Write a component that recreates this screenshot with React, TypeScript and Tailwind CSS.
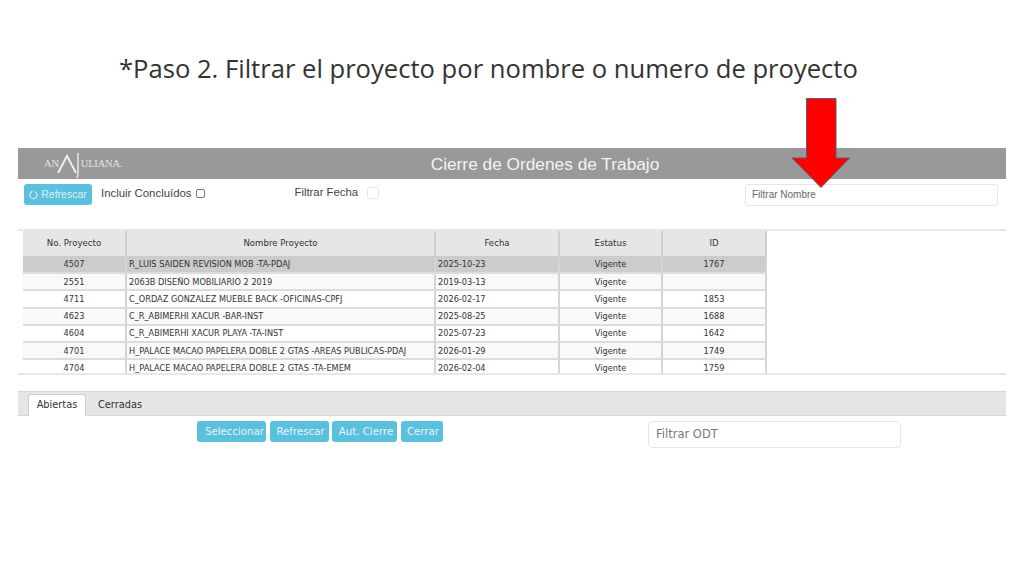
import React from "react";

const rows = [
  ["4507", "R_LUIS SAIDEN REVISION MOB -TA-PDAJ", "2025-10-23", "Vigente", "1767"],
  ["2551", "2063B DISEÑO MOBILIARIO 2 2019", "2019-03-13", "Vigente", ""],
  ["4711", "C_ORDAZ GONZALEZ MUEBLE BACK -OFICINAS-CPFJ", "2026-02-17", "Vigente", "1853"],
  ["4623", "C_R_ABIMERHI XACUR -BAR-INST", "2025-08-25", "Vigente", "1688"],
  ["4604", "C_R_ABIMERHI XACUR PLAYA -TA-INST", "2025-07-23", "Vigente", "1642"],
  ["4701", "H_PALACE MACAO PAPELERA DOBLE 2 GTAS -AREAS PUBLICAS-PDAJ", "2026-01-29", "Vigente", "1749"],
  ["4704", "H_PALACE MACAO PAPELERA DOBLE 2 GTAS -TA-EMEM", "2026-02-04", "Vigente", "1759"],
];

const cols = "grid grid-cols-[104px_309px_124px_103px_104px]";

function ActionButton({ label, width }: { label: string; width: string }) {
  return (
    <button className={`${width} h-[21px] rounded-[3px] bg-[#5bc0de] text-[10.2px] text-[#e4f5fa] font-['DejaVu_Sans',sans-serif] flex items-center justify-center`}>
      {label}
    </button>
  );
}

export default function App() {
  return (
    <div className="relative w-[1024px] h-[576px] overflow-hidden bg-white text-[#333] font-['Liberation_Sans',sans-serif]">
      <h1 className="pt-[51px] pl-[119px] h-[148px] text-[25.6px] leading-[36px] text-[#333333] font-['Open_Sans',sans-serif] font-normal whitespace-nowrap">
        *Paso 2. Filtrar el proyecto por nombre o numero de proyecto
      </h1>

      <div className="mx-[18px] w-[988px]">
        <header className="relative h-[31px] bg-[#999999] flex items-center justify-center">
          <div className="absolute left-[26px] top-0 h-[31px] flex items-center text-[#e3e3e3] text-[10.5px] font-['Liberation_Serif',serif] tracking-[-0.2px]">
            <span>AN</span>
            <svg width="22" height="28" viewBox="0 0 22 28" className="-ml-[3px] -mr-[2px]" aria-hidden="true">
              <path d="M2 23 L11 6 L20 23" fill="none" stroke="#ececec" strokeWidth="2" />
            </svg>
            <svg width="4" height="28" viewBox="0 0 4 28" aria-hidden="true">
              <path d="M2 3 V22 Q2 26 1 28" fill="none" stroke="#ececec" strokeWidth="1.4" />
            </svg>
            <span className="ml-px">ULIANA.</span>
          </div>
          <span className="text-[17.3px] pt-[2px] text-[#f3f3f3] relative left-[33px]">Cierre de Ordenes de Trabajo</span>
        </header>

        <div className="flex h-[50px] pt-[5px] pl-[6px] items-start">
          <button className="w-[68px] h-[21px] rounded-[3px] bg-[#5bc0de] text-[#d9f0f7] text-[10.5px] flex items-center justify-center gap-[3px]">
            <svg width="9" height="10" viewBox="0 0 10 10" aria-hidden="true">
              <path d="M6.5 1.4 A4 4 0 1 1 3 1.6" fill="none" stroke="#d9f0f7" strokeWidth="1.2" />
              <path d="M1.8 0.4 L4 0.6 L3.2 2.8 Z" fill="#d9f0f7" />
            </svg>
            Refrescar
          </button>
          <label className="ml-[9px] flex items-center h-[20px] text-[11.4px] text-[#444] whitespace-nowrap">
            Incluir Concluídos
            <span className="ml-[4px] -mt-[2px] w-[9px] h-[9px] border border-[#777] rounded-[2px] bg-white" />
          </label>
          <label className="ml-[90px] flex items-center h-[17px] text-[11.3px] text-[#444] whitespace-nowrap">
            Filtrar Fecha
            <span className="ml-[9px] w-[12px] h-[12px] border border-[#e3e6ea] rounded-[3px] bg-white" />
          </label>
          <div className="ml-auto mr-[8px] w-[253px] h-[22px] border border-[#e6e6e6] rounded-[3px] pl-[6px] pb-px flex items-center text-[10px] text-[#666]">
            Filtrar Nombre
          </div>
        </div>

        <div className="h-[146px] border-y-2 border-[#e8e8e8] overflow-hidden font-['DejaVu_Sans',sans-serif] text-[8.2px] text-[#333]">
          <div className={`${cols} ml-[5px] w-[744px] h-[25px] bg-[#e6e6e6] text-[#333] text-[8.6px]`}>
            {["No. Proyecto", "Nombre Proyecto", "Fecha", "Estatus", "ID"].map((h) => (
              <div key={h} className="flex items-center justify-center border-r-2 border-[#cdcdcd]">{h}</div>
            ))}
          </div>
          {rows.map((r, i) => (
            <div
              key={r[0]}
              className={`${cols} ml-[5px] w-[744px] border-b-2 border-[#dcdcdc] ${i === 0 ? "h-[18px] pt-px bg-[#cccccc]" : i % 2 === 1 ? "h-[17.3px] bg-[#f9f9f9]" : "h-[17.3px] bg-white"}`}
            >
              <div className="flex items-center justify-center border-r-2 border-[#d4d4d4]">{r[0]}</div>
              <div className="flex items-center pl-[2px] border-r-2 border-[#d4d4d4] whitespace-nowrap">{r[1]}</div>
              <div className="flex items-center pl-[2px] border-r-2 border-[#d4d4d4]">{r[2]}</div>
              <div className="flex items-center justify-center border-r-2 border-[#d4d4d4]">{r[3]}</div>
              <div className="flex items-center justify-center border-r-2 border-[#d4d4d4]">{r[4]}</div>
            </div>
          ))}
        </div>

        <div className="mt-[16px] h-[25px] bg-[#e6e6e6] border-y border-[#d6d6d6] pl-[10px] flex items-end text-[9.8px] text-[#333] font-['DejaVu_Sans',sans-serif]">
          <div className="w-[58px] h-[22px] -mb-px pb-px bg-white border border-b-0 border-[#cfcfcf] rounded-t-[3px] flex items-center justify-center">
            Abiertas
          </div>
          <div className="ml-[12px] h-[20px] flex items-center">Cerradas</div>
        </div>

        <div className="flex items-start pt-[5px]">
          <div className="ml-[179px] flex gap-[3.5px]">
            <ActionButton label="Seleccionar" width="w-[69px] pl-[6px]" />
            <ActionButton label="Refrescar" width="w-[59px] pl-[3px]" />
            <ActionButton label="Aut. Cierre" width="w-[65px] pl-[3px]" />
            <ActionButton label="Cerrar" width="w-[42px] pl-[3px]" />
          </div>
          <div className="ml-[205.5px] w-[253px] h-[27px] border border-[#e6e6e6] rounded-[4px] pl-[7px] pt-px flex items-center text-[11.5px] text-[#777] font-['DejaVu_Sans',sans-serif]">
            Filtrar ODT
          </div>
        </div>
      </div>

      <svg className="absolute left-[790px] top-[97px]" width="62" height="93" viewBox="0 0 62 93" aria-hidden="true">
        <path d="M16.5 1.5 H46 V61 H59.5 L31 90.5 L2 61 H16.5 Z" fill="#ff0000" stroke="#5b5b78" strokeWidth="1" />
      </svg>
    </div>
  );
}
